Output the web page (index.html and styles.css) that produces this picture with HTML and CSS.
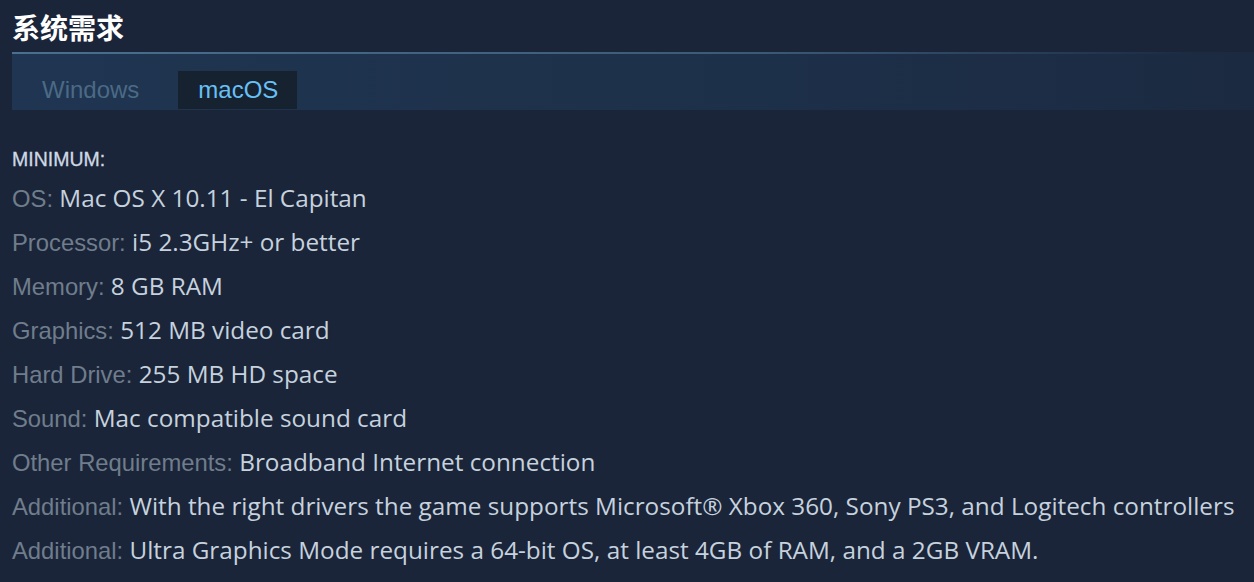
FILE: index.html
```html
<!DOCTYPE html>
<html>
<head lang="zh">
	<meta charset="UTF-8">
	<title>系统需求</title>
	<link rel="stylesheet" href="styles.css">
</head>
<body>
<div class="sysreq">
	<h2 class="title">系统需求</h2>
	<div class="tabs">
		<div class="tab">Windows</div>
		<div class="tab active">macOS</div>
	</div>
	<div class="req">
		<p class="min">MINIMUM:</p>
		<ul>
			<li><span>OS:</span> Mac OS X 10.11 - El Capitan</li>
			<li><span>Processor:</span> i5 2.3GHz+ or better</li>
			<li><span>Memory:</span> 8 GB RAM</li>
			<li><span>Graphics:</span> 512 MB video card</li>
			<li><span>Hard Drive:</span> 255 MB HD space</li>
			<li><span>Sound:</span> Mac compatible sound card</li>
			<li><span>Other Requirements:</span> Broadband Internet connection</li>
			<li><span>Additional:</span> With the right drivers the game supports Microsoft® Xbox 360, Sony PS3, and Logitech controllers</li>
			<li><span>Additional:</span> Ultra Graphics Mode requires a 64-bit OS, at least 4GB of RAM, and a 2GB VRAM.</li>
		</ul>
	</div>
</div>
</body>
</html>
```

FILE: styles.css
```css
*{
	margin:0;
	padding:0;
}
body{
	background:#1b2539;
	font-family:"Liberation Sans", Arial, "Noto Sans CJK SC", sans-serif;
	width:1254px;
	height:582px;
	overflow:hidden;
}
.sysreq{
	padding:0 0 0 12px;
}
.title{
	font-family:"Noto Sans CJK SC", sans-serif;
	font-size:28px;
	font-weight:bold;
	color:#fff;
	line-height:32px;
	padding-top:11px;
	height:52px;
	box-sizing:border-box;
}
.tabs{
	display:flex;
	height:58px;
	border-top:2px solid #3a5a78;
	border-image:linear-gradient(to right,#4a6f8f 0%,#3b5a77 60%,rgba(27,37,57,0) 95%) 1;
	background:linear-gradient(to right,#1f3551 0%,#1d3049 60%,#1b2a41 100%);
	padding-left:12px;
	align-items:flex-end;
	box-sizing:border-box;
}
.tab{
	font-size:24px;
	color:#4b6a86;
	height:38px;
	line-height:38px;
	padding:0 18px;
	margin-bottom:1px;
}
.tab + .tab{
	margin-left:21px;
}
.tab.active{
	background:#172231;
	color:#67c1f5;
	padding:0 19px 0 20px;
}
.req{
	padding-top:37px;
}
.min{
	font-size:19.5px;
	color:#cfd9e4;
	line-height:24px;
	-webkit-text-stroke:0.3px #cfd9e4;
}
.req ul{
	list-style:none;
	padding-top:5px;
}
.req li{
	font-family:"Open Sans", sans-serif;
	font-size:24.3px;
	height:44px;
	line-height:44px;
	color:#c6d2de;
	white-space:nowrap;
}
.req li span{
	font-family:"Liberation Sans", Arial, sans-serif;
	font-size:23.8px;
	color:#6f7d8c;
}
```
